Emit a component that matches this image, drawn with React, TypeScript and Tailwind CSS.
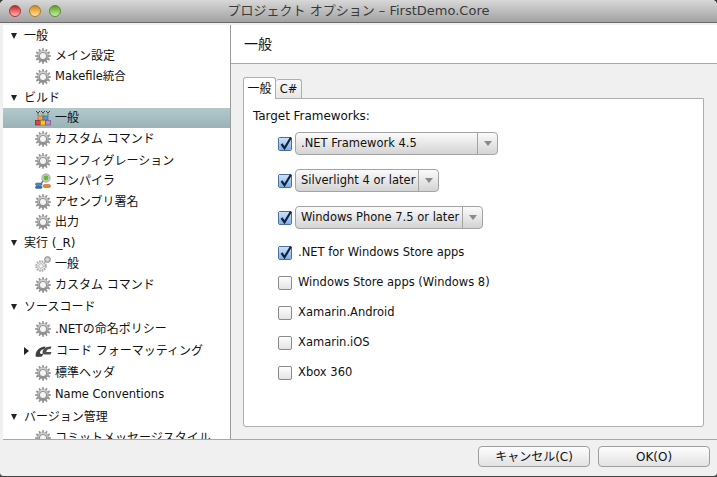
import React from "react";

const font = { fontFamily: '"DejaVu Sans", "Noto Sans CJK JP", sans-serif' };

function Gear() {
    const teeth = Array.from({ length: 12 }, (_, i) => i * 30);
    return (
        <svg width="16" height="16" viewBox="0 0 16 16">
            <defs>
                <linearGradient id="gearFill" x1="0" y1="0" x2="0" y2="1">
                    <stop offset="0" stopColor="#dcdcdc" />
                    <stop offset="1" stopColor="#858585" />
                </linearGradient>
            </defs>
            {teeth.map(a => (
                <rect key={a} x="7.1" y="0.2" width="1.8" height="3" fill="#979797" transform={`rotate(${a} 8 8)`} />
            ))}
            <circle cx="8" cy="8" r="5.7" fill="url(#gearFill)" stroke="#8c8c8c" strokeWidth="0.4" />
            <circle cx="8" cy="8" r="3.6" fill="#f4f4f4" stroke="#7d7d7d" strokeWidth="0.8" />
        </svg>
    );
}

function RunGear() {
    return (
        <svg width="16" height="16" viewBox="0 0 16 16">
            <circle cx="6" cy="10" r="4.6" fill="none" stroke="#ababab" strokeWidth="2.4" strokeDasharray="1.6 0.8" />
            <circle cx="6" cy="10" r="2.4" fill="#f0f0f0" stroke="#9a9a9a" strokeWidth="0.7" />
            <circle cx="12.5" cy="3.5" r="3" fill="#bdbdbd" stroke="#8d8d8d" strokeWidth="0.8" />
            <circle cx="12.5" cy="3.5" r="1.1" fill="#eeeeee" />
        </svg>
    );
}

function BricksIcon() {
    return (
        <svg width="16" height="16" viewBox="0 0 16 16">
            <path d="M1 1l2 2 2-2M6 1l2 2 2-2M11 1l2 2 2-2" stroke="#444" strokeWidth="1" fill="none" />
            <path d="M8 2.5v3M3 2.5v3M13 2.5v3" stroke="#6a6a6a" strokeWidth="1" />
            <rect x="6.5" y="3.5" width="3" height="2" fill="#8fbf5a" />
            <rect x="3" y="6" width="5" height="4" fill="#eda35a" stroke="#a8682a" strokeWidth="0.6" />
            <rect x="8" y="6" width="5" height="4" fill="#5c94d6" stroke="#2f5f9c" strokeWidth="0.6" />
            <rect x="0.5" y="10.5" width="5" height="4.5" fill="#e0414a" stroke="#8f1f25" strokeWidth="0.7" />
            <rect x="5.5" y="10.5" width="5" height="4.5" fill="#f2c531" stroke="#a1811a" strokeWidth="0.7" />
            <rect x="10.5" y="10.5" width="5" height="4.5" fill="#c08bc4" stroke="#7a4f80" strokeWidth="0.7" />
        </svg>
    );
}

function CompilerIcon() {
    return (
        <svg width="16" height="16" viewBox="0 0 16 16">
            <circle cx="11" cy="5" r="4.2" fill="#c9c9c9" stroke="#8a8a8a" strokeWidth="0.6" />
            <circle cx="11" cy="5" r="2.4" fill="#63b92f" />
            <path d="M8 8l-2 3" stroke="#777" strokeWidth="1.4" />
            <rect x="0.5" y="10" width="6.5" height="2.6" rx="1.3" fill="#4c86c8" stroke="#2d5b92" strokeWidth="0.5" />
            <rect x="0.5" y="13" width="6.5" height="2.6" rx="1.3" fill="#3a6ea8" stroke="#2d5b92" strokeWidth="0.5" />
            <rect x="8" y="11.5" width="7.5" height="3" rx="1.5" fill="#e8862a" stroke="#a85b14" strokeWidth="0.5" />
        </svg>
    );
}

function FormatIcon() {
    return (
        <svg width="17" height="16" viewBox="0 0 17 16">
            <path d="M0.5 12.5C1 7 5 3.5 10.5 3.5L9.5 6C6.5 6.2 5 8 5 9.8 5 11 6.5 11.2 8.5 10.5L7 13.5C3 14.2 .2 14.2 .5 12.5Z" fill="#3f3f3f" />
            <path d="M7.5 9.5C7.5 6 11 3 16.5 3.5L15.5 6C12.5 5.8 11 7.5 11.5 9H16.5L15.5 11.5H9.5C8 11.5 7.5 10.5 7.5 9.5Z" fill="#505050" />
        </svg>
    );
}

type Row = {
    label: string;
    h: number;
    level: 0 | 1;
    icon?: "gear" | "run" | "bricks" | "compiler" | "format";
    selected?: boolean;
    closed?: boolean;
    latin?: boolean;
};

const rows: Row[] = [
    { label: "一般", h: 21, level: 0 },
    { label: "メイン設定", h: 20, level: 1, icon: "gear" },
    { label: "Makefile統合", h: 21, level: 1, icon: "gear", latin: true },
    { label: "ビルド", h: 21, level: 0 },
    { label: "一般", h: 20, level: 1, icon: "bricks", selected: true },
    { label: "カスタム コマンド", h: 22, level: 1, icon: "gear" },
    { label: "コンフィグレーション", h: 21, level: 1, icon: "gear" },
    { label: "コンパイラ", h: 20, level: 1, icon: "compiler" },
    { label: "アセンブリ署名", h: 21, level: 1, icon: "gear" },
    { label: "出力", h: 20, level: 1, icon: "gear" },
    { label: "実行 (_R)", h: 21, level: 0 },
    { label: "一般", h: 21, level: 1, icon: "run" },
    { label: "カスタム コマンド", h: 22, level: 1, icon: "gear" },
    { label: "ソースコード", h: 22, level: 0 },
    { label: ".NETの命名ポリシー", h: 22, level: 1, icon: "gear" },
    { label: "コード フォーマッティング", h: 22, level: 1, icon: "format", closed: true },
    { label: "標準ヘッダ", h: 22, level: 1, icon: "gear" },
    { label: "Name Conventions", h: 22, level: 1, icon: "gear", latin: true },
    { label: "バージョン管理", h: 21, level: 0 },
    { label: "コミットメッセージスタイル", h: 21, level: 1, icon: "gear" },
];

function RowIcon({ icon }: { icon: Row["icon"] }) {
    if (icon === "gear") return <Gear />;
    if (icon === "run") return <RunGear />;
    if (icon === "bricks") return <BricksIcon />;
    if (icon === "compiler") return <CompilerIcon />;
    return <FormatIcon />;
}

function TreeRow({ row }: { row: Row }) {
    return (
        <div
            style={{ height: row.h }}
            className={`flex items-center shrink-0 text-[#111] whitespace-nowrap ${row.latin ? "text-[11.5px]" : "text-[12px]"} ${row.selected ? "bg-gradient-to-b from-[#b2c9cc] to-[#9ab3b7]" : ""}`}
        >
            {row.level === 0 ? (
                <>
                    <span className="ml-[8px] w-0 h-0 border-l-[3.5px] border-r-[3.5px] border-t-[6px] border-l-transparent border-r-transparent border-t-[#222]" />
                    <span className="ml-[7px]">{row.label}</span>
                </>
            ) : (
                <>
                    {row.closed ? (
                        <span className="ml-[21px] mr-[6px] w-0 h-0 border-t-[4px] border-b-[4px] border-l-[5px] border-t-transparent border-b-transparent border-l-[#222]" />
                    ) : (
                        <span className="ml-[32px]" />
                    )}
                    <RowIcon icon={row.icon} />
                    <span className="ml-[4px]">{row.label}</span>
                </>
            )}
        </div>
    );
}

function Checkbox({ checked }: { checked: boolean }) {
    return (
        <span className={`relative block w-[14px] h-[14px] shrink-0 rounded-[2px] border bg-gradient-to-b from-[#fdfdfd] to-[#e4e4e4] ${checked ? "border-[#4d6f9e]" : "border-[#8a8a8a]"}`}>
            {checked && (
                <>
                    <span className="absolute inset-0 rounded-[1px] bg-gradient-to-b from-[#cfe1f7] to-[#7fb0e8]" />
                    <svg width="16" height="16" viewBox="0 0 16 16" className="absolute left-[-1px] top-[-3px]">
                        <path d="M3.5 9l3 4.2L13 2.5" fill="none" stroke="#10233f" strokeWidth="2.2" />
                    </svg>
                </>
            )}
        </span>
    );
}

function Select({ label, w }: { label: string; w: number }) {
    return (
        <span style={{ width: w }} className="flex h-[23px] rounded-[4px] border border-[#a3a3a3] bg-gradient-to-b from-[#fbfbfb] to-[#d4d4d4] text-[11.5px] text-[#111]">
            <span className="flex-1 pl-[5px] leading-[21px] whitespace-nowrap">{label}</span>
            <span className="w-[20px] shrink-0 border-l border-[#a3a3a3] flex items-center justify-center">
                <span className="w-0 h-0 border-l-[4px] border-r-[4px] border-t-[5px] border-l-transparent border-r-transparent border-t-[#8a8a8a]" />
            </span>
        </span>
    );
}

function FrameworkSelect({ label, w }: { label: string; w: number }) {
    return (
        <div className="flex items-center h-[37px] gap-[3px]">
            <Checkbox checked />
            <Select label={label} w={w} />
        </div>
    );
}

function FrameworkCheck({ label, checked = false }: { label: string; checked?: boolean }) {
    return (
        <div className="flex items-center h-[30px] gap-[6px] text-[11.5px] text-[#111]">
            <Checkbox checked={checked} />
            <span>{label}</span>
        </div>
    );
}

function FooterButton({ label }: { label: string }) {
    return (
        <button className="w-[112px] h-[21px] rounded-[4px] border border-[#9f9f9f] bg-gradient-to-b from-[#fdfdfd] to-[#e2e2e2] text-[12px] text-[#111] flex items-center justify-center">
            {label}
        </button>
    );
}

export default function App() {
    return (
        <div style={font} className="w-[717px] h-[477px] flex flex-col overflow-hidden bg-[#3a3a3a]">
            <div className="flex flex-col flex-1 min-h-0 bg-[#f0f0f0] rounded-t-[5px] rounded-b-[4px] border-b border-[#444] overflow-hidden">
                {/* Title bar */}
                <div className="relative h-[23px] shrink-0 flex items-center justify-center bg-gradient-to-b from-[#d8d8d8] to-[#a2a2a2] border-b border-[#6a6a6a]">
                    <div className="absolute left-[9px] top-[5px] flex gap-[8px]">
                        <span className="w-[12px] h-[12px] rounded-full border border-[#a5353a] bg-gradient-to-b from-[#b5242a] via-[#ee6a6e] to-[#f9b3b0]" />
                        <span className="w-[12px] h-[12px] rounded-full border border-[#a87a24] bg-gradient-to-b from-[#c98a1f] via-[#f1b552] to-[#fbdf9e]" />
                        <span className="w-[12px] h-[12px] rounded-full border border-[#5c8c34] bg-gradient-to-b from-[#619a2a] via-[#8fca5f] to-[#c8ecab]" />
                    </div>
                    <span className="text-[13px] text-[#3a3a3a]">プロジェクト オプション – FirstDemo.Core</span>
                </div>

                {/* Body */}
                <div className="flex flex-1 min-h-0 pt-[2px] pl-[3px]">
                    <div className="w-[228px] shrink-0 bg-white border-r border-[#9c9c9c] overflow-hidden flex flex-col">
                        {rows.map((r, i) => <TreeRow key={i} row={r} />)}
                    </div>
                    <div className="flex-1 min-w-0 flex flex-col">
                        <div className="h-[39px] shrink-0 bg-white border-b border-[#a8a8a8] flex items-center pl-[13px] pt-[1px] text-[14px] text-[#111]">一般</div>
                        <div className="flex-1 min-h-0 pl-[12px] pr-[13px] pt-[13px] pb-[12px] flex flex-col">
                            <div className="flex h-[22px] shrink-0 items-end">
                                <span className="relative z-10 h-[22px] w-[33px] bg-white border border-b-0 border-[#aeaeae] rounded-t-[3px] text-[12px] text-[#111] flex items-center justify-center">一般</span>
                                <span className="h-[20px] w-[26px] bg-gradient-to-b from-[#fafafa] to-[#e6e6e6] border border-l-0 border-b-0 border-[#aeaeae] rounded-t-[3px] text-[11.5px] text-[#111] flex items-center justify-center">C#</span>
                            </div>
                            <div className="flex-1 -mt-[1px] bg-white border border-[#aeaeae] rounded-b-[3px] pt-[10px] pl-[9px]">
                                <div className="text-[12px] leading-[15px] tracking-[-0.05px] text-[#111]">Target Frameworks:</div>
                                <div className="flex flex-col pl-[25px] mt-[1px]">
                                    <FrameworkSelect label=".NET Framework 4.5" w={203} />
                                    <FrameworkSelect label="Silverlight 4 or later" w={144} />
                                    <FrameworkSelect label="Windows Phone 7.5 or later" w={188} />
                                    <div className="mt-[2px]">
                                        <FrameworkCheck label=".NET for Windows Store apps" checked />
                                    </div>
                                    <FrameworkCheck label="Windows Store apps (Windows 8)" />
                                    <FrameworkCheck label="Xamarin.Android" />
                                    <FrameworkCheck label="Xamarin.iOS" />
                                    <FrameworkCheck label="Xbox 360" />
                                </div>
                            </div>
                        </div>
                    </div>
                </div>

                {/* Footer */}
                <div className="h-[37px] shrink-0 ml-[3px] border-t border-[#a8a8a8] flex items-start justify-end gap-[8px] pt-[6px] pr-[7px]">
                    <FooterButton label="キャンセル(C)" />
                    <FooterButton label="OK(O)" />
                </div>
            </div>
        </div>
    );
}
